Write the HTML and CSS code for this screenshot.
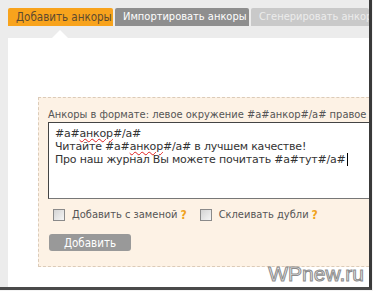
FILE: index.html
```html
<!DOCTYPE html>
<html lang="ru">
<head>
  <meta charset="UTF-8">
  <title>Анкоры</title>
  <link rel="stylesheet" href="styles.css">
</head>
<body>
  <div class="frame">
    <nav class="tabs">
      <span class="tab tab-active">Добавить анкоры</span>
      <span class="tab tab-import">Импортировать анкоры</span>
      <span class="tab tab-generate">Сгенерировать анкоры</span>
    </nav>

    <main class="panel">
      <div class="anchor-box">
        <div class="hint">Анкоры в формате: левое окружение #а#анкор#/а# правое окружение</div>
        <div class="editor">
          <div>#а#<span class="typo">анкор</span>#/а#</div>
          <div>Читайте #а#<span class="typo">анкор</span>#/а# в лучшем качестве!</div>
          <div>Про наш журнал Вы можете почитать #а#тут#/а#<span class="caret"></span></div>
        </div>
        <div class="options">
          <label class="option"><span class="checkbox"></span>Добавить с заменой<sup class="help">?</sup></label>
          <label class="option"><span class="checkbox"></span>Склеивать дубли<sup class="help">?</sup></label>
        </div>
        <button class="add-button">Добавить</button>
      </div>
      <div class="watermark">WPnew.ru</div>
    </main>
  </div>
</body>
</html>
```

FILE: styles.css
```css
body {
  margin: 0;
  padding: 0;
  background: #f4f4f4;
  font-family: 'DejaVu Sans Condensed', 'DejaVu Sans', sans-serif;
}

.frame {
  width: 369px;
  height: 287px;
  background: #ececec;
  border-right: 3px solid #3a3a3a;
  border-bottom: 3px solid #4a4a4a;
  display: flex;
  flex-direction: column;
  overflow: hidden;
}

.tabs {
  display: flex;
  gap: 2px;
  padding: 8px 0 0 8px;
  white-space: nowrap;
}

.tab {
  position: relative;
  height: 18px;
  line-height: 18px;
  padding: 0 8px;
  font-size: 11px;
  border-radius: 2px 2px 0 0;
}

.tab-active {
  width: 89px;
  background: #f8a31c;
  color: #5e4a30;
  font-size: 11.5px;
}

.tab-active::after {
  content: '';
  position: absolute;
  left: 44px;
  top: 22px;
  border-left: 8px solid transparent;
  border-right: 8px solid transparent;
  border-bottom: 8px solid #fff;
}

.tab-import {
  width: 118px;
  background: #8e8e8e;
  color: #fff;
}

.tab-generate {
  width: 120px;
  background: #c9c9c9;
  color: #ececec;
  overflow: hidden;
}

.panel {
  position: relative;
  flex: 1;
  margin: 12px 0 0 8px;
  padding: 59px 0 0 30px;
  background: #fff;
  overflow: hidden;
}

.anchor-box {
  width: 360px;
  padding: 10px 0 15px 9px;
  background: #fdf2e5;
  border: 1px dashed #dccbb8;
  white-space: nowrap;
}

.hint {
  font-size: 11px;
  color: #555;
  line-height: 13px;
  margin-bottom: 1px;
}

.editor {
  width: 330px;
  height: 67px;
  padding: 4px 6px;
  background: #fff;
  border: 1px solid #444;
  border-bottom-color: #777;
  font-family: 'DejaVu Sans', Verdana, sans-serif;
  font-size: 11px;
  line-height: 13px;
  letter-spacing: -0.2px;
  color: #333;
}

.typo {
  text-decoration: underline wavy #e02020;
  text-decoration-thickness: 1px;
  text-underline-offset: 1px;
}

.caret {
  display: inline-block;
  width: 1px;
  height: 13px;
  margin-left: 1px;
  vertical-align: top;
  background: #000;
}

.options {
  display: flex;
  gap: 13px;
  margin: 9px 0 0 5px;
}

.option {
  display: flex;
  align-items: center;
  font-size: 11px;
  color: #555;
}

.checkbox {
  width: 10px;
  height: 10px;
  margin-right: 7px;
  border: 1px solid #8a8a8a;
  background: linear-gradient(135deg, #d4d4d4, #f5f5f5);
}

.help {
  margin-left: 3px;
  font-size: 12px;
  font-weight: bold;
  color: #f0a21c;
  vertical-align: 6px;
  line-height: 0;
}

.add-button {
  display: block;
  width: 82px;
  height: 17px;
  margin: 13px 0 0 1px;
  padding: 0;
  border: none;
  border-radius: 3px;
  background: #999;
  color: #fff;
  font-family: 'DejaVu Sans Condensed', 'DejaVu Sans', sans-serif;
  font-size: 11.5px;
}

.watermark {
  position: absolute;
  right: 5px;
  bottom: 1px;
  font-family: 'Liberation Sans', Arial, sans-serif;
  font-size: 21px;
  color: #f2f2f2;
  -webkit-text-stroke: 1px #8c8c8c;
}
```
